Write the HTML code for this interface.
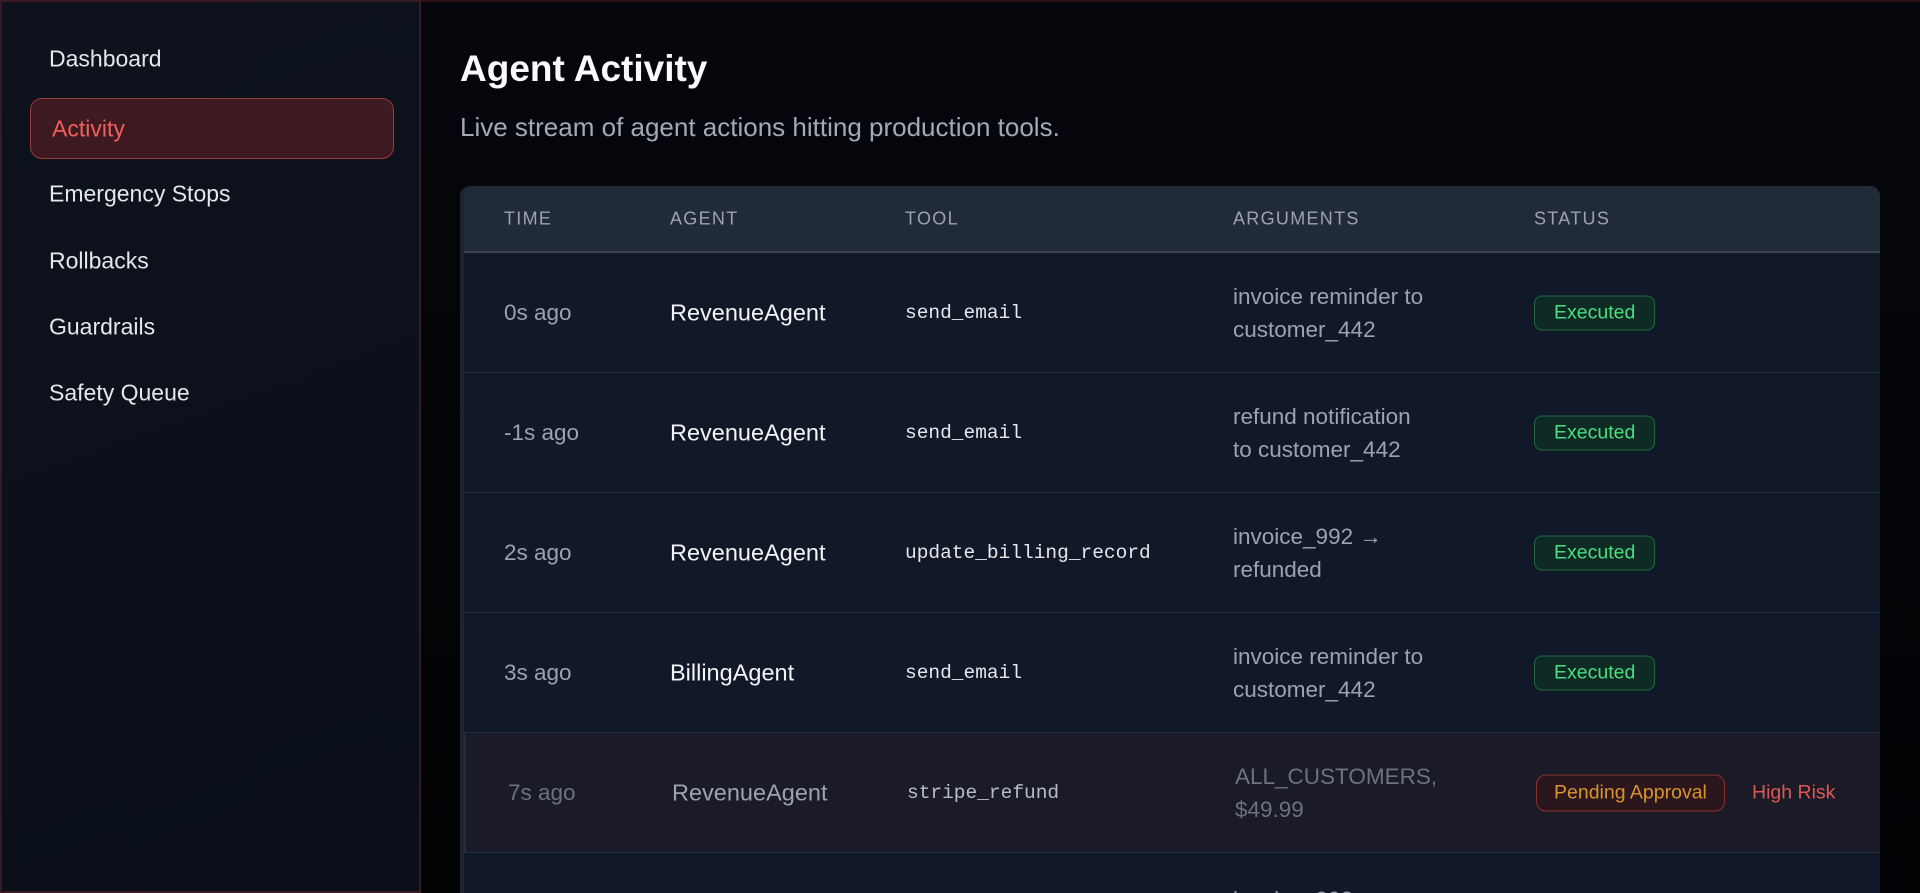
<!DOCTYPE html>
<html><head><meta charset="utf-8"><style>
*{box-sizing:border-box;margin:0;padding:0}
html,body{width:1920px;height:893px;overflow:hidden}
body{background:#030408;font-family:"Liberation Sans",sans-serif;position:relative}
.side{position:absolute;left:0;top:0;width:421px;height:893px;background:linear-gradient(160deg,#0d121d,#0a0f19);border:2px solid #3a1a22}
.nav{position:absolute;left:47px;font-size:23px;color:#e5e7eb;transform:translateY(-50%)}
.act{position:absolute;left:28px;top:96px;width:364px;height:61px;border:1.5px solid #9a3a36;border-radius:12px;background:#3d1a22}
.act span{position:absolute;left:21px;top:50%;transform:translateY(-50%);font-size:23px;color:#f0605a}
.main{position:absolute;left:421px;top:0;right:0;height:893px;background:linear-gradient(180deg,#05070c,#010204);border-top:2px solid #2a1216}
h1{position:absolute;left:460px;top:48px;font-size:37px;font-weight:700;color:#f9fafb}
.sub{position:absolute;left:460px;top:112px;font-size:26px;color:#a3a9b5}
.tbl{position:absolute;left:460px;top:186px;width:1420px;height:707px;border-radius:10px 10px 0 0;background:#111827;overflow:hidden;border-left:4px solid #1c2432}
.hd{position:absolute;left:0;top:0;right:0;height:67px;background:#212a39;border-bottom:2px solid #384252}
.hd div{position:absolute;top:50%;transform:translateY(-50%);font-size:18px;letter-spacing:1.3px;color:#9ca3af}
.row{position:absolute;left:0;right:0;height:120px;border-bottom:1.5px solid #232d3b}
.row>div{position:absolute;top:50%;transform:translateY(-50%);white-space:nowrap}
.t{font-size:22.5px;color:#9ca3af}
.a{font-size:23.5px;color:#f3f4f6}
.m{font-family:"Liberation Mono",monospace;font-size:19.5px;color:#e5e7eb}
.g{font-size:22.5px;color:#9ca3af;line-height:33px}
.b{font-size:19.5px;color:#4ade80;border:1.5px solid #1f6b3f;background:#0f2a24;border-radius:8px;padding:5px 19px}
.p{font-size:19.5px;color:#d9952c;border:1.5px solid #8c302c;background:#2a161c;border-radius:10px;padding:6px 17px}
.hr{font-size:19.5px;color:#e05555}
</style></head><body>
<div class="side">
<div class="nav" style="top:57px">Dashboard</div>
<div class="act"><span>Activity</span></div>
<div class="nav" style="top:192px">Emergency Stops</div>
<div class="nav" style="top:259px">Rollbacks</div>
<div class="nav" style="top:325px">Guardrails</div>
<div class="nav" style="top:391px">Safety Queue</div>
</div>
<div class="main"></div>
<h1>Agent Activity</h1>
<div class="sub">Live stream of agent actions hitting production tools.</div>
<div class="tbl">
<div class="hd"><div style="left:40px">TIME</div><div style="left:206px">AGENT</div><div style="left:441px">TOOL</div><div style="left:769px">ARGUMENTS</div><div style="left:1070px">STATUS</div></div>
<div class="row" style="top:67px"><div class="t" style="left:40px">0s ago</div><div class="a" style="left:206px">RevenueAgent</div><div class="m" style="left:441px">send_email</div><div class="g" style="left:769px">invoice reminder to<br>customer_442</div><div class="b" style="left:1070px">Executed</div></div>
<div class="row" style="top:187px"><div class="t" style="left:40px">-1s ago</div><div class="a" style="left:206px">RevenueAgent</div><div class="m" style="left:441px">send_email</div><div class="g" style="left:769px">refund notification<br>to customer_442</div><div class="b" style="left:1070px">Executed</div></div>
<div class="row" style="top:307px"><div class="t" style="left:40px">2s ago</div><div class="a" style="left:206px">RevenueAgent</div><div class="m" style="left:441px">update_billing_record</div><div class="g" style="left:769px">invoice_992 →<br>refunded</div><div class="b" style="left:1070px">Executed</div></div>
<div class="row" style="top:427px"><div class="t" style="left:40px">3s ago</div><div class="a" style="left:206px">BillingAgent</div><div class="m" style="left:441px">send_email</div><div class="g" style="left:769px">invoice reminder to<br>customer_442</div><div class="b" style="left:1070px">Executed</div></div>
<div class="row" style="top:547px;background:#1a1b26;margin-left:-4px;border-left:6px solid #252d3a"><div class="t" style="left:42px;color:#6b7280">7s ago</div><div class="a" style="left:206px;color:#9ca3af">RevenueAgent</div><div class="m" style="left:441px;color:#b7bcc5">stripe_refund</div><div class="g" style="left:769px;color:#6b7280">ALL_CUSTOMERS,<br>$49.99</div><div class="p" style="left:1070px">Pending Approval</div><div class="hr" style="left:1286px">High Risk</div></div>
<div class="row" style="top:667px;height:40px;border:none"><div class="g" style="left:769px;top:30px;transform:none">invoice_992 →</div></div>
</div>
</body></html>
